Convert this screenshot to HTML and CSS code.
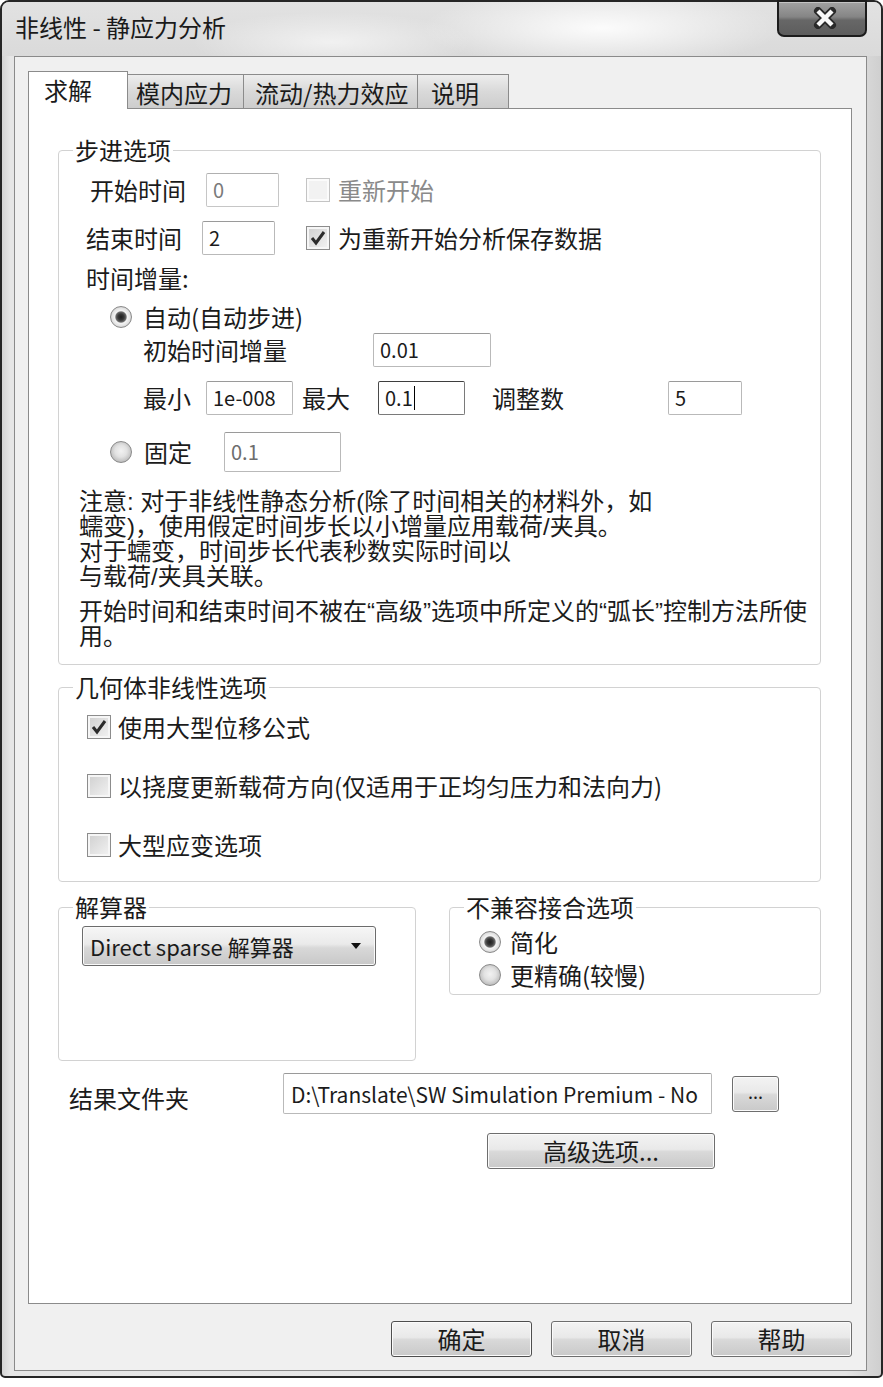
FILE: index.html
```html
<!DOCTYPE html>
<html lang="zh-CN">
<head>
<meta charset="utf-8">
<title>非线性 - 静应力分析</title>
<link rel="stylesheet" href="styles.css">
</head>
<body>
<div class="window">
  <div class="titlebar">
    <div class="title">非线性 - 静应力分析</div>
    <div class="close">
      <svg width="26" height="22" viewBox="0 0 26 22"><path d="M6 4 L20 18 M20 4 L6 18" stroke="#2a2a2a" stroke-width="8" stroke-linecap="round"/><path d="M6 4 L20 18 M20 4 L6 18" stroke="#fafafa" stroke-width="4.4"/></svg>
    </div>
  </div>
  <div class="client">
    <div class="tabs">
      <div class="tab tab-active tab-solve">求解</div>
      <div class="tab tab-mold">模内应力</div>
      <div class="tab tab-flow">流动/热力效应</div>
      <div class="tab tab-desc">说明</div>
    </div>
    <div class="panel">
      <fieldset class="group group-step">
        <legend>步进选项</legend>
        <div class="row row-start">
          <span class="lbl">开始时间</span>
          <span class="field field-disabled field-time">0</span>
          <span class="check check-disabled check-gap"></span>
          <span class="check-label text-disabled">重新开始</span>
        </div>
        <div class="row row-end">
          <span class="lbl">结束时间</span>
          <span class="field field-time">2</span>
          <span class="check check-gap2"><svg width="20" height="20" viewBox="0 0 20 20"><path d="M4 10 L8 15 L16 4" fill="none" stroke="#2c2c2c" stroke-width="3"/></svg></span>
          <span class="check-label">为重新开始分析保存数据</span>
        </div>
        <div class="row row-inc">时间增量:</div>
        <div class="row row-auto">
          <span class="radio radio-on"></span>
          <span class="radio-label">自动(自动步进)</span>
        </div>
        <div class="row row-init">
          <span class="lbl lbl-init">初始时间增量</span>
          <span class="field field-init">0.01</span>
        </div>
        <div class="row row-minmax">
          <span class="lbl">最小</span>
          <span class="field field-min">1e-008</span>
          <span class="lbl lbl-max">最大</span>
          <span class="field field-max field-focus">0.1<span class="caret"></span></span>
          <span class="lbl lbl-adj">调整数</span>
          <span class="field field-adj">5</span>
        </div>
        <div class="row row-fixed">
          <span class="radio"></span>
          <span class="radio-label radio-label-fixed">固定</span>
          <span class="field field-fixed field-grey">0.1</span>
        </div>
        <div class="note">
          <p>注意: 对于非线性静态分析(除了时间相关的材料外，如<br>蠕变)，使用假定时间步长以小增量应用载荷/夹具。<br>对于蠕变，时间步长代表秒数实际时间以<br>与载荷/夹具关联。</p>
          <p>开始时间和结束时间不被在“高级”选项中所定义的“弧长”控制方法所使<br>用。</p>
        </div>
      </fieldset>

      <fieldset class="group group-geo">
        <legend>几何体非线性选项</legend>
        <div class="row geo-row geo-first">
          <span class="check"><svg width="20" height="20" viewBox="0 0 20 20"><path d="M4 10 L8 15 L16 4" fill="none" stroke="#2c2c2c" stroke-width="3"/></svg></span>
          <span class="geo-label">使用大型位移公式</span>
        </div>
        <div class="row geo-row">
          <span class="check"></span>
          <span class="geo-label">以挠度更新载荷方向(仅适用于正均匀压力和法向力)</span>
        </div>
        <div class="row geo-row">
          <span class="check"></span>
          <span class="geo-label">大型应变选项</span>
        </div>
      </fieldset>

      <div class="pair">
        <fieldset class="group group-solver">
          <legend>解算器</legend>
          <div class="select">
            <span>Direct sparse 解算器</span>
            <svg class="arrow" width="12" height="8" viewBox="0 0 12 8"><path d="M1 1 L11 1 L6 7 Z" fill="#111"/></svg>
          </div>
        </fieldset>
        <fieldset class="group group-contact">
          <legend>不兼容接合选项</legend>
          <div class="row contact-row contact-first">
            <span class="radio radio-on"></span>
            <span class="contact-label">简化</span>
          </div>
          <div class="row contact-row">
            <span class="radio"></span>
            <span class="contact-label">更精确(较慢)</span>
          </div>
        </fieldset>
      </div>

      <div class="row row-folder">
        <span class="lbl">结果文件夹</span>
        <span class="field field-path">D:\Translate\SW Simulation Premium - No</span>
        <span class="btn btn-browse">...</span>
      </div>
      <div class="row row-adv">
        <span class="btn btn-adv">高级选项...</span>
      </div>
    </div>
    <div class="actions">
      <span class="btn btn-action btn-default">确定</span>
      <span class="btn btn-action">取消</span>
      <span class="btn btn-action">帮助</span>
    </div>
  </div>
</div>
</body>
</html>
```

FILE: styles.css
```css
* { box-sizing: border-box; }
html, body { margin: 0; padding: 0; }
body {
  width: 883px;
  height: 1387px;
  overflow: hidden;
  background: #ffffff;
  font-family: "Noto Sans CJK SC", "Noto Sans", sans-serif;
  font-size: 24px;
  line-height: 26px;
  color: #1b1b1b;
}

/* window frame */
.window {
  width: 883px;
  height: 1378px;
  border: 2px solid #262626;
  border-radius: 9px 9px 5px 5px;
  background: linear-gradient(90deg, #d4d4d4 0, #e6e6e6 8px, #e4e4e4 96%, #cfcfcf 100%);
  display: flex;
  flex-direction: column;
}
.titlebar {
  height: 54px;
  display: flex;
  align-items: flex-start;
  border-radius: 7px 7px 0 0;
  background:
    radial-gradient(ellipse 180px 40px at 600px 26px, rgba(255,255,255,0.9), rgba(255,255,255,0) 100%),
    radial-gradient(ellipse 140px 30px at 330px 40px, rgba(255,255,255,0.6), rgba(255,255,255,0) 100%),
    linear-gradient(180deg, #e2e2e2, #dadada);
}
.title {
  margin: 12px 0 0 13px;
  color: #1a1a1a;
}
.close {
  margin: -2px 14px 0 auto;
  width: 90px;
  height: 37px;
  border: 2px solid #1c1c1c;
  border-radius: 0 0 7px 7px;
  background: linear-gradient(180deg, #a2a2a2 0, #858585 45%, #676767 55%, #5d5d5d 100%);
  box-shadow: inset 0 1px 0 #c4c4c4;
  display: flex;
  align-items: center;
  justify-content: center;
  padding: 0 0 2px 6px;
}

/* client area */
.client {
  flex: 1;
  margin: 0 14px 5px 12px;
  border: 1px solid #8a8a8a;
  background: #f0f0f0;
  padding: 14px 14px 13px 13px;
  display: flex;
  flex-direction: column;
}

/* tabs */
.tabs {
  display: flex;
  align-items: flex-end;
  height: 37px;
}
.tab {
  height: 34px;
  border: 1px solid #8b8b8b;
  border-bottom: none;
  background: linear-gradient(180deg, #ededed, #d9d9d9 50%, #cdcdcd);
  padding: 5px 0 0 8px;
  white-space: nowrap;
  margin-left: -1px;
}
.tab-active {
  height: 38px;
  margin-bottom: -1px;
  margin-left: 0;
  background: #ffffff;
  position: relative;
  z-index: 1;
  padding-left: 15px;
}
.tab-solve { width: 100px; }
.tab-mold { width: 117px; }
.tab-flow { width: 175px; padding-left: 11px; }
.tab-desc { width: 92px; padding-left: 13px; }

/* panel */
.panel {
  flex: 1;
  border: 1px solid #8b8b8b;
  background: #ffffff;
  padding: 28px 30px 0 29px;
  display: flex;
  flex-direction: column;
}

.group {
  margin: 0;
  padding: 0;
  min-width: 0;
  border: 1px solid #d2d2d2;
  border-radius: 4px;
}
.group legend {
  margin-left: 14px;
  padding: 0 2px;
  line-height: 26px;
}
.group-step { padding-bottom: 15px; }
.group-geo { margin-top: 9px; padding-bottom: 24px; }

.row {
  display: flex;
  align-items: center;
}
.lbl, .check-label, .radio-label, .geo-label, .contact-label { white-space: nowrap; }

/* inputs */
.field {
  height: 34px;
  border: 1px solid #b9b9b9;
  border-top-color: #9a9a9a;
  border-radius: 2px;
  background: #ffffff;
  font-size: 20px;
  padding-left: 6px;
  display: flex;
  align-items: center;
  white-space: nowrap;
  overflow: hidden;
  color: #1b1b1b;
}
.field-disabled { border-color: #c6c6c6; border-top-color: #b0b0b0; color: #7a7a7a; }
.field-grey { color: #6d6d6d; }
.field-focus { border-color: #7a7a7a; border-top-color: #3e3e3e; border-left-color: #4a4a4a; }
.caret { width: 1px; height: 24px; background: #000; margin-left: 1px; }

/* checkbox */
.check {
  width: 24px;
  height: 24px;
  flex: none;
  border: 1px solid #8c8c8c;
  background: linear-gradient(135deg, #cfcfcf, #f3f3f3);
  box-shadow: inset 0 0 0 2px #f6f6f6;
  display: flex;
  align-items: center;
  justify-content: center;
}
.check-disabled {
  border-color: #c4c4c4;
  background: #f2f2f2;
  box-shadow: inset 0 0 0 2px #fbfbfb;
}
.text-disabled { color: #8a8a8a; }

/* radio */
.radio {
  width: 22px;
  height: 22px;
  flex: none;
  border-radius: 50%;
  border: 1px solid #8a8a8a;
  background: radial-gradient(circle at 50% 45%, #f2f2f2 0, #e2e2e2 40%, #bcbcbc 75%, #dcdcdc 100%);
}
.radio-on {
  background: radial-gradient(circle at 50% 50%, #1e1e1e 0, #3a3a3a 22%, #6a6a6a 36%, #f4f4f4 44%, #e4e4e4 62%, #c4c4c4 82%, #e0e0e0 100%);
}

/* step options rows */
.row-start { margin-top: 10px; height: 34px; padding-left: 31px; }
.row-end { margin-top: 14px; height: 34px; padding-left: 27px; }
.field-time { width: 73px; margin-left: 20px; }
.check-gap { margin-left: 27px; }
.check-gap2 { margin-left: 31px; }
.check-label { margin-left: 8px; }
.row-inc { margin-top: 10px; height: 26px; padding-left: 27px; }
.row-auto { margin-top: 13px; height: 26px; padding-left: 51px; }
.radio-label { margin-left: 11px; }
.row-init { margin-top: 3px; height: 34px; padding-left: 84px; }
.field-init { width: 118px; margin-left: 86px; }
.row-minmax { margin-top: 14px; height: 34px; padding-left: 84px; }
.field-min { width: 87px; margin-left: 15px; }
.lbl-max { margin-left: 9px; }
.field-max { width: 87px; margin-left: 28px; }
.lbl-adj { margin-left: 27px; }
.field-adj { width: 74px; margin-left: 104px; }
.row-fixed { margin-top: 17px; height: 40px; padding-left: 51px; }
.radio-label-fixed { margin-left: 12px; }
.field-fixed { width: 117px; height: 40px; margin-left: 32px; }

.note {
  margin-top: 17px;
  padding-left: 20px;
  line-height: 25px;
  font-family: "Liberation Sans", "Noto Sans CJK SC", sans-serif;
}
.note p { margin: 0; }
.note p + p { margin-top: 10px; }

/* geometry */
.geo-row { height: 24px; margin-top: 35px; padding-left: 28px; }
.geo-row.geo-first { margin-top: 15px; }
.geo-label { margin-left: 7px; }

/* solver + contact */
.pair {
  margin-top: 12px;
  display: flex;
  align-items: flex-start;
  justify-content: space-between;
}
.group-solver { width: 358px; height: 167px; }
.group-contact { width: 372px; padding-bottom: 6px; }
.select {
  margin: 6px 0 0 23px;
  width: 294px;
  height: 40px;
  border: 1px solid #6c6c6c;
  border-radius: 3px;
  background: linear-gradient(180deg, #f6f6f6 0, #eaeaea 45%, #d8d8d8 55%, #c8c8c8 100%);
  box-shadow: inset 0 0 0 1px #fafafa;
  display: flex;
  align-items: center;
  padding-left: 7px;
  font-size: 22px;
  white-space: nowrap;
}
.arrow { margin-left: auto; margin-right: 13px; }
.contact-row { height: 26px; margin-top: 7px; padding-left: 29px; }
.contact-row.contact-first { margin-top: 9px; }
.contact-label { margin-left: 9px; }

/* folder + advanced */
.row-folder { margin-top: 12px; padding-left: 11px; height: 41px; }
.row-folder .lbl { padding-top: 8px; }
.field-path { width: 429px; height: 41px; margin-left: 94px; font-size: 21px; padding-left: 7px; }

.btn {
  height: 36px;
  border: 1px solid #6e6e6e;
  border-radius: 3px;
  background: linear-gradient(180deg, #f3f3f3 0, #e9e9e9 45%, #d9d9d9 52%, #c9c9c9 100%);
  box-shadow: inset 0 0 0 1px #fbfbfb;
  display: flex;
  align-items: center;
  justify-content: center;
  white-space: nowrap;
}
.btn-browse { width: 47px; margin-left: 20px; font-size: 18px; padding-bottom: 6px; }
.row-adv { margin-top: 19px; padding-left: 429px; }
.btn-adv { width: 228px; }

.actions {
  margin-top: 17px;
  display: flex;
  justify-content: flex-end;
  gap: 19px;
}
.btn-action { width: 141px; }
.btn-default { border-color: #4e4e4e; }
```
